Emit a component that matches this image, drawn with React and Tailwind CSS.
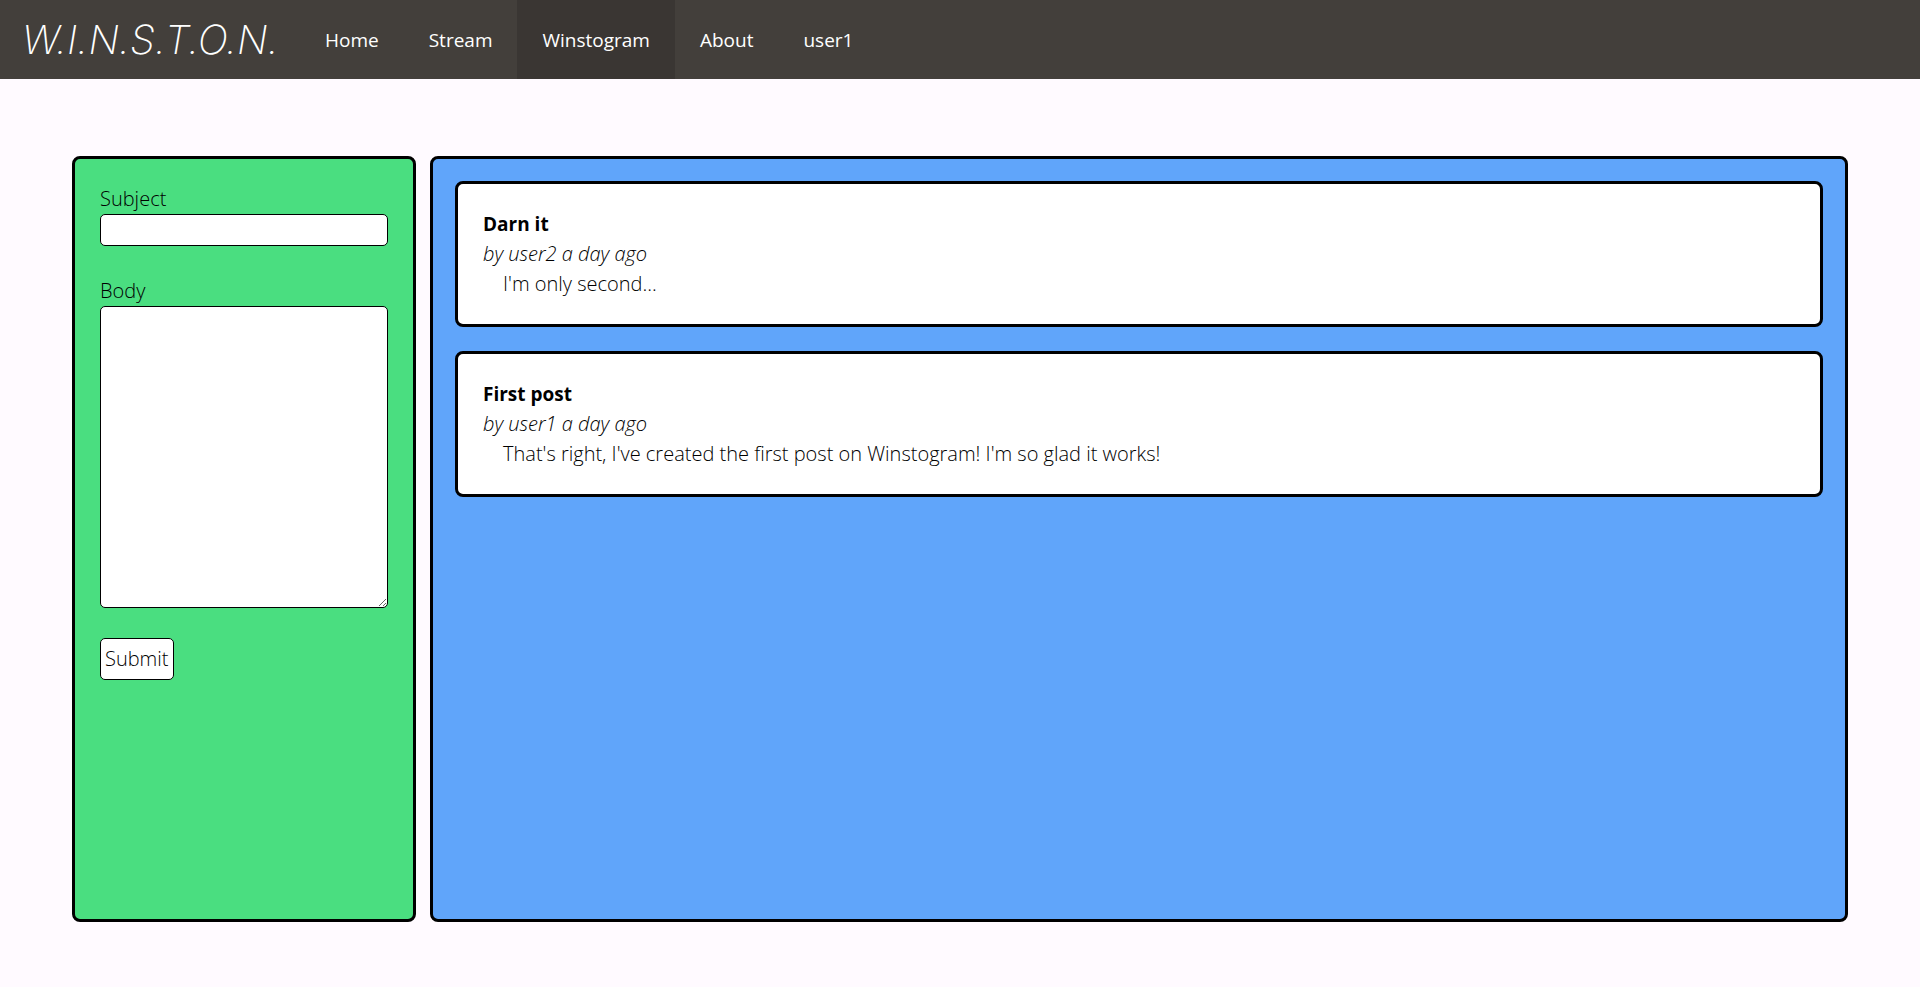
import React from 'react';

const links = ['Home', 'Stream', 'Winstogram', 'About', 'user1'];

const posts = [
  { title: 'Darn it', author: 'user2', when: 'a day ago', body: "I'm only second..." },
  {
    title: 'First post',
    author: 'user1',
    when: 'a day ago',
    body: "That's right, I've created the first post on Winstogram! I'm so glad it works!",
  },
];

function Header() {
  return (
    <header className="flex h-[79px] items-stretch bg-[#433f3b] text-white">
      <a
        href="#"
        className="flex w-[300px] shrink-0 items-center whitespace-nowrap pl-[22px] font-['Inter',sans-serif] text-[40px] font-extralight italic"
      >
        W.I.N.S.T.O.N.
      </a>
      <nav className="flex items-stretch text-[19px]">
        {links.map((name) => (
          <a
            key={name}
            href="#"
            className={
              name === 'Winstogram'
                ? 'flex items-center bg-[#3a3633] px-[25px]'
                : 'flex items-center px-[25px]'
            }
          >
            {name}
          </a>
        ))}
      </nav>
    </header>
  );
}

function PostForm() {
  return (
    <form
      className="flex w-[344px] shrink-0 flex-col items-start gap-[30px] rounded-lg border-[3px] border-black bg-[#4ade80] p-[25px] font-[350]"
      onSubmit={(e) => e.preventDefault()}
    >
      <div className="w-full">
        <label htmlFor="subject" className="block">Subject</label>
        <input id="subject" type="text" className="block h-8 w-full rounded-[5px] border border-black bg-white px-1" />
      </div>
      <div className="w-full">
        <label htmlFor="body" className="block">Body</label>
        <textarea id="body" rows={10} className="block h-[302px] w-full rounded-[5px] border border-black bg-white px-1" />
      </div>
      <button type="submit" className="rounded-[5px] border border-black bg-white px-1 py-[5px]">
        Submit
      </button>
    </form>
  );
}

function Post({ post }) {
  return (
    <article className="rounded-lg border-[3px] border-black bg-white p-[25px]">
      <h2 className="text-[19px] leading-[30px] font-bold">{post.title}</h2>
      <p className="font-[350] italic">by {post.author} {post.when}</p>
      <p className="pl-5 font-[350]">{post.body}</p>
    </article>
  );
}

export default function App() {
  return (
    <div className="flex min-h-screen flex-col bg-[#fffaff] font-['Open_Sans',sans-serif] text-[20px] leading-[30px] text-black">
      <Header />
      <main className="flex flex-1 gap-[14px] px-[72px] pt-[77px] pb-[65px]">
        <PostForm />
        <section className="flex flex-1 flex-col gap-6 rounded-lg border-[3px] border-black bg-[#60a5fa] p-[22px]">
          {posts.map((post) => (
            <Post key={post.title} post={post} />
          ))}
        </section>
      </main>
    </div>
  );
}
